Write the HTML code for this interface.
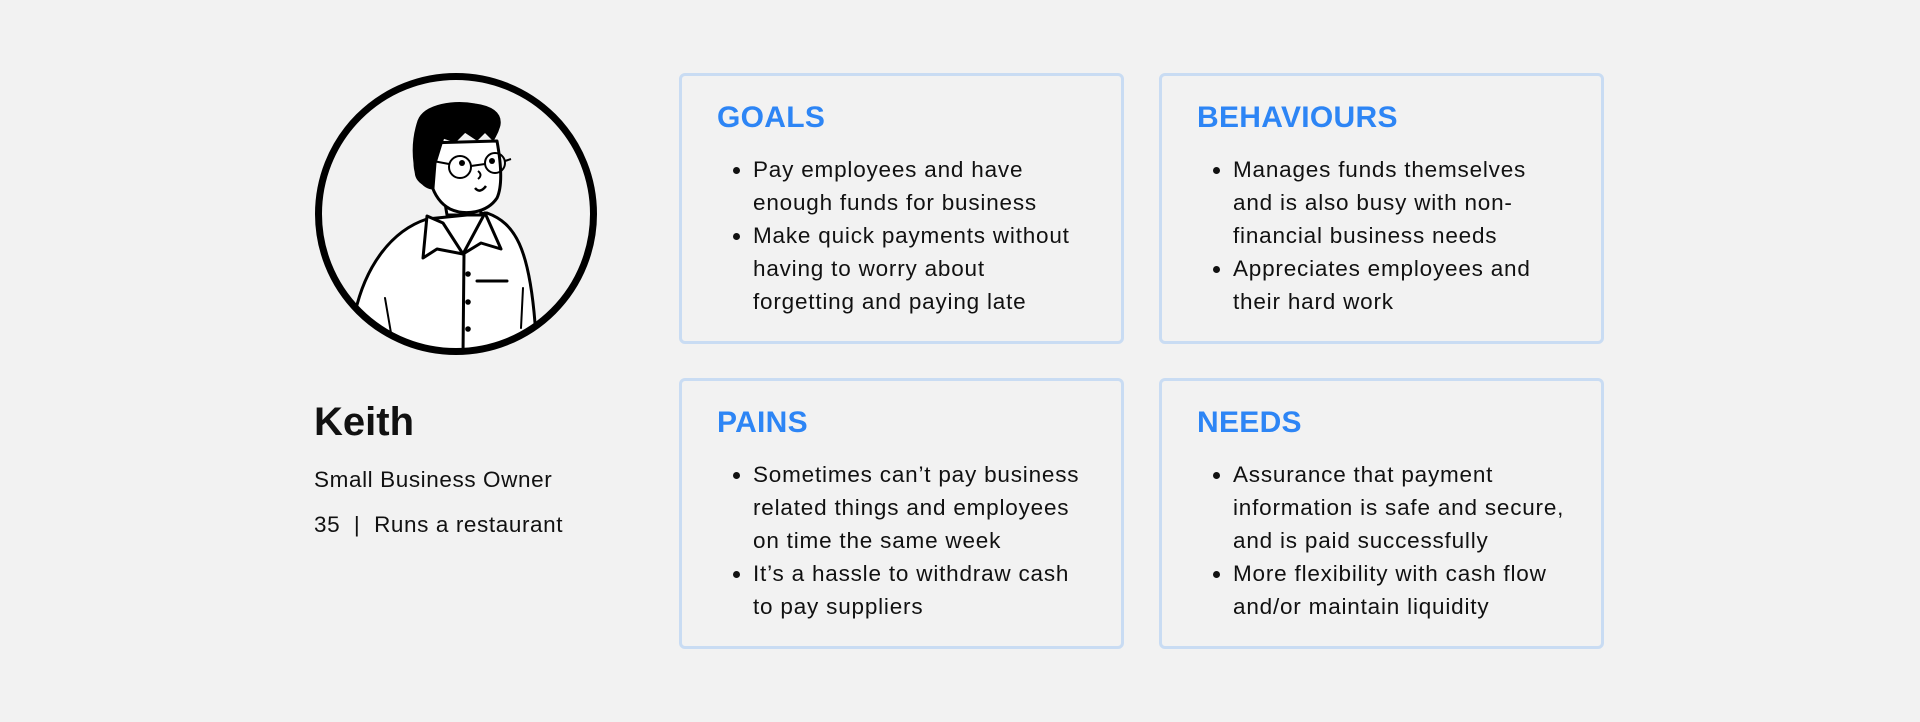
<!DOCTYPE html>
<html><head><meta charset="utf-8"><style>
*{margin:0;padding:0;box-sizing:border-box}
body{width:1920px;height:722px;background:#f2f2f2;font-family:"Liberation Sans",sans-serif;color:#111;position:relative;overflow:hidden}
.card{position:absolute;width:445px;height:271px;border:3px solid #c9dcf3;border-radius:6px}
.card h2{position:absolute;left:35px;top:27px;font-size:30px;line-height:30px;font-weight:bold;color:#2d85f5;letter-spacing:0.3px}
.card ul{position:absolute;left:71px;top:77px;list-style:none;font-size:22.5px;line-height:33px;white-space:nowrap;letter-spacing:0.8px}
.card li{position:relative}
.card li:before{content:"";position:absolute;left:-20px;top:14px;width:7px;height:7px;border-radius:50%;background:#111}
.abs{position:absolute;white-space:nowrap}
</style></head><body>
<svg class="abs" style="left:315px;top:73px" width="282" height="282" viewBox="0 0 282 282">
<defs><clipPath id="c"><circle cx="141" cy="141" r="137"/></clipPath></defs>
<g clip-path="url(#c)" stroke="#000" stroke-width="3" stroke-linejoin="round" stroke-linecap="round">
<path d="M40,240 C50,195 75,158 112,146 L172,140 C200,150 214,175 220,250 L222,290 L40,290 Z" fill="#fff"/>
<path d="M128,118 L132,142 L166,142 L164,120 Z" fill="#fff"/>
<path d="M112,143 L108,185 L122,176 L148,181 L128,150 Z" fill="#fff"/>
<path d="M170,140 L186,176 L166,170 L148,181 Z" fill="#fff"/>
<path d="M149,181 L148,282" fill="none"/>
<path d="M162,208 L192,208" fill="none"/>
<path d="M70,225 L76,260 M208,215 L206,255" fill="none" stroke-width="2"/>
<path d="M112,70 C112,100 115,125 135,136 C150,143 172,140 182,125 C188,112 186,90 182,68 Z" fill="#fff"/>
<path d="M110,90 C98,90 98,108 112,112" fill="#fff"/>
<path d="M104,48 C110,32 140,28 160,32 C175,34 186,40 184,52 C182,60 180,62 178,66 L170,58 L162,66 L150,58 L140,68 L128,64 L120,90 L118,115 C110,115 100,105 100,90 C98,75 100,60 104,48 Z" fill="#000"/>
</g>
<g stroke="#000" fill="none" stroke-width="2">
<circle cx="145" cy="94" r="11"/><circle cx="180" cy="90" r="10"/>
<path d="M156,93 L170,91 M134,91 L118,88 M190,88 L196,86"/>
<path d="M160,115 Q165,121 171,113" stroke-width="2.5"/>
<path d="M163,98 Q168,102 163,106"/>
</g>
<circle cx="147" cy="90" r="3"/><circle cx="177" cy="88" r="3"/>
<circle cx="153" cy="201" r="2.8"/><circle cx="153" cy="229" r="2.8"/><circle cx="153" cy="256" r="2.8"/>
<circle cx="141" cy="141" r="137.5" fill="none" stroke="#000" stroke-width="7"/>
</svg>
<div class="abs" style="left:314px;top:402px;font-size:40px;line-height:40px;font-weight:bold">Keith</div>
<div class="abs" style="left:314px;top:463px;font-size:22.5px;line-height:33px;letter-spacing:0.6px">Small Business Owner</div>
<div class="abs" style="left:314px;top:508px;font-size:22.5px;line-height:33px;letter-spacing:0.6px">35 &nbsp;|&nbsp; Runs a restaurant</div>

<div class="card" style="left:679px;top:73px"><h2>GOALS</h2><ul>
<li>Pay employees and have<br>enough funds for business</li>
<li>Make quick payments without<br>having to worry about<br>forgetting and paying late</li></ul></div>
<div class="card" style="left:1159px;top:73px"><h2>BEHAVIOURS</h2><ul>
<li>Manages funds themselves<br>and is also busy with non-<br>financial business needs</li>
<li>Appreciates employees and<br>their hard work</li></ul></div>
<div class="card" style="left:679px;top:378px"><h2>PAINS</h2><ul>
<li>Sometimes can’t pay business<br>related things and employees<br>on time the same week</li>
<li>It’s a hassle to withdraw cash<br>to pay suppliers</li></ul></div>
<div class="card" style="left:1159px;top:378px"><h2>NEEDS</h2><ul>
<li>Assurance that payment<br>information is safe and secure,<br>and is paid successfully</li>
<li>More flexibility with cash flow<br>and/or maintain liquidity</li></ul></div>
</body></html>
